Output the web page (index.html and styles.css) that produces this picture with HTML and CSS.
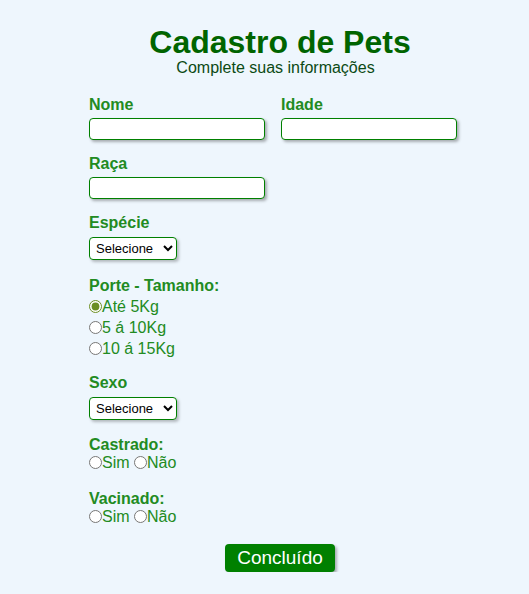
FILE: index.html
```html
<!DOCTYPE html>
<html lang="pt-BR">
<head>
<meta charset="utf-8">
<title>Cadastro de Pets</title>
<link rel="stylesheet" href="styles.css">
</head>
<body>
<main class="wrap">
  <header class="head">
    <h1 class="title">Cadastro de Pets</h1>
    <p class="subtitle">Complete suas informações</p>
  </header>
  <form class="form">
    <div class="row2">
      <div class="field">
        <label class="lbl" for="nome">Nome</label>
        <input class="txt" id="nome" type="text">
      </div>
      <div class="field">
        <label class="lbl" for="idade">Idade</label>
        <input class="txt" id="idade" type="text">
      </div>
    </div>
    <div class="field">
      <label class="lbl" for="raca">Raça</label>
      <input class="txt" id="raca" type="text">
    </div>
    <div class="field field-sel">
      <label class="lbl" for="especie">Espécie</label>
      <select class="sel" id="especie"><option>Selecione</option></select>
    </div>
    <div class="group">
      <span class="lbl lbl-list">Porte - Tamanho:</span>
      <label class="opt block"><input class="rad" type="radio" name="porte" checked>Até 5Kg</label>
      <label class="opt block"><input class="rad" type="radio" name="porte">5 á 10Kg</label>
      <label class="opt block"><input class="rad" type="radio" name="porte">10 á 15Kg</label>
    </div>
    <div class="field field-sexo">
      <label class="lbl" for="sexo">Sexo</label>
      <select class="sel" id="sexo"><option>Selecione</option></select>
    </div>
    <div class="group pair">
      <span class="lbl">Castrado:</span>
      <div class="inline">
        <label class="opt"><input class="rad" type="radio" name="castrado">Sim</label>
        <label class="opt"><input class="rad" type="radio" name="castrado">Não</label>
      </div>
    </div>
    <div class="group pair">
      <span class="lbl">Vacinado:</span>
      <div class="inline">
        <label class="opt"><input class="rad" type="radio" name="vacinado">Sim</label>
        <label class="opt"><input class="rad" type="radio" name="vacinado">Não</label>
      </div>
    </div>
    <div class="actions">
      <button class="btn" type="button">Concluído</button>
    </div>
  </form>
</main>
</body>
</html>
```

FILE: styles.css
```css
html, body {
  margin: 0;
  padding: 0;
  background: #eef6fd;
}
body {
  font-family: "Liberation Sans", Arial, sans-serif;
}
.wrap {
  padding: 25px 58px 0 89px;
}
.head {
  text-align: center;
}
.title {
  margin: 0;
  font-size: 32px;
  line-height: 34px;
  font-weight: bold;
  color: #006400;
}
.subtitle {
  margin: 0;
  padding-right: 9px;
  font-size: 16px;
  line-height: 18px;
  color: #0b4a14;
}
.form {
  margin-top: 19px;
  display: flex;
  flex-direction: column;
}
.row2 {
  display: grid;
  grid-template-columns: 176px 176px;
  column-gap: 16px;
}
.field {
  display: flex;
  flex-direction: column;
  align-items: flex-start;
  margin-bottom: 15px;
}
.field .lbl {
  margin-bottom: 4px;
}
.field-sel {
  margin-bottom: 17px;
}
.field-sexo {
  margin-bottom: 16px;
}
.group {
  display: flex;
  flex-direction: column;
  align-items: flex-start;
  margin-bottom: 15px;
}
.lbl-list {
  margin-bottom: 1px;
}
.pair {
  margin-bottom: 18px;
}
.lbl {
  font-size: 16px;
  line-height: 18px;
  font-weight: bold;
  color: #228b22;
}
.txt {
  box-sizing: border-box;
  width: 176px;
  height: 22px;
  margin: 0;
  border: 1px solid #008000;
  border-radius: 4px;
  background: #fff;
  box-shadow: 2px 2px 3px rgba(0, 0, 0, 0.3);
  padding: 1px 4px;
}
.sel {
  box-sizing: border-box;
  width: 88px;
  height: 23px;
  margin: 1px 0 0;
  border: 1px solid #008000;
  border-radius: 4px;
  background: #fff;
  box-shadow: 2px 2px 3px rgba(0, 0, 0, 0.25);
  font-family: "Liberation Sans", Arial, sans-serif;
  font-size: 13px;
  color: #000;
  padding: 0 2px;
}
.opt {
  font-size: 16px;
  line-height: 21px;
  color: #228b22;
}
.block {
  display: block;
}
.inline .opt {
  line-height: 18px;
}
.rad {
  width: 13px;
  height: 13px;
  margin: 0;
  vertical-align: -1px;
  accent-color: #6b8e23;
}
.actions {
  display: flex;
  justify-content: center;
  margin-top: 0;
}
.btn {
  box-sizing: border-box;
  height: 28px;
  font-family: "Liberation Sans", Arial, sans-serif;
  font-size: 19px;
  line-height: 20px;
  color: #fff;
  background: #008000;
  border: none;
  border-radius: 4px;
  padding: 3px 12px;
  box-shadow: 2px 2px 3px rgba(0, 0, 0, 0.3);
}
```
